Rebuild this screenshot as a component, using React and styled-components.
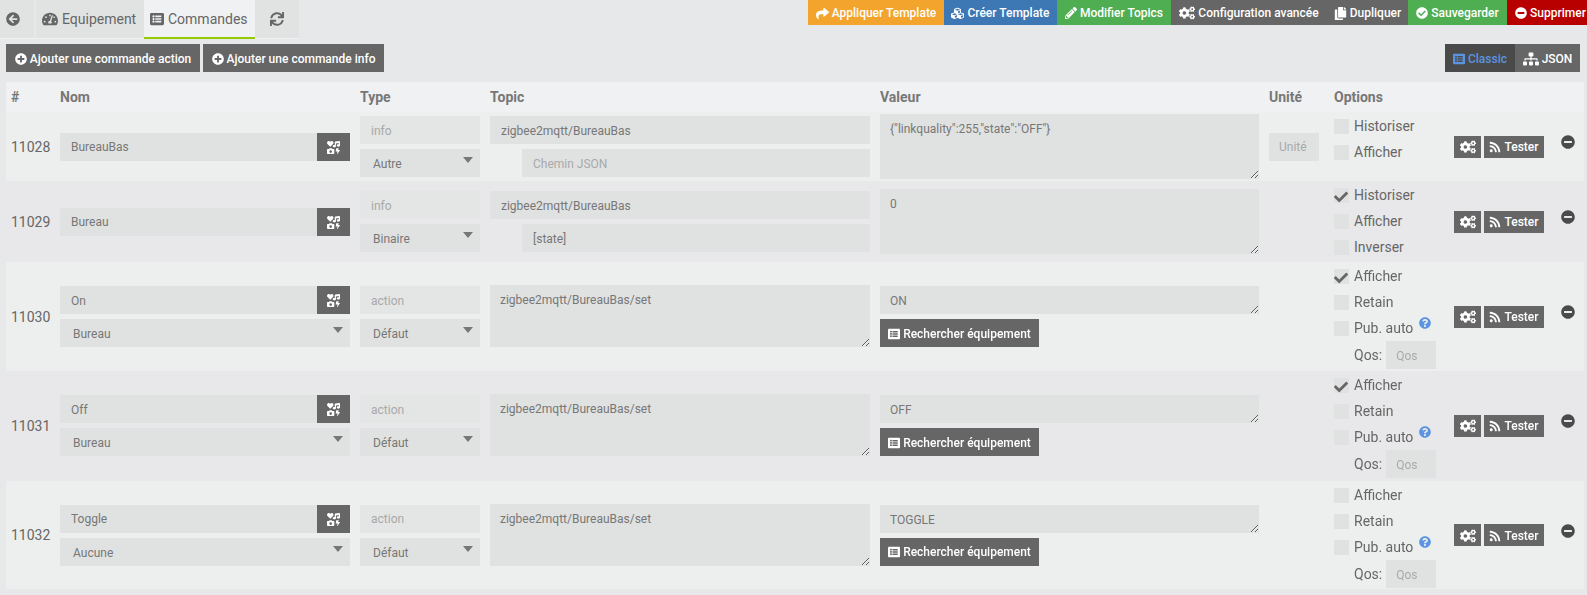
import React from 'react';
import styled, { createGlobalStyle } from 'styled-components';
import {
  FaArrowCircleLeft, FaTachometerAlt, FaListAlt, FaSync, FaShare, FaCubes, FaPencilAlt, FaCogs,
  FaCopy, FaCheckCircle, FaMinusCircle, FaPlusCircle, FaSitemap, FaRss, FaQuestionCircle, FaIcons, FaCheck,
} from 'react-icons/fa';

const GlobalStyle = createGlobalStyle`
  html, body { margin: 0; padding: 0; background: #e7e8ea; }
  body { font-family: Roboto, "Liberation Sans", sans-serif; color: #666; font-size: 14px; }
  * { box-sizing: border-box; }
`;

const Page = styled.div`
  width: 1587px;
  height: 595px;
  overflow: hidden;
`;

const Header = styled.div`
  display: flex;
  justify-content: space-between;
  height: 39px;
`;

const Tabs = styled.div`
  display: flex;
  align-items: stretch;
  width: 299px;
  border-bottom: 1px solid #f0f1f2;
`;

const Tab = styled.div`
  display: flex;
  align-items: center;
  justify-content: ${p => (p.$center ? 'center' : 'flex-start')};
  gap: 4px;
  width: ${p => p.$w}px;
  margin-left: ${p => p.$ml || 0}px;
  padding-left: ${p => (p.$center ? 0 : 6)}px;
  background: ${p => (p.$active ? '#eff1f2' : '#e1e3e3')};
  border-bottom: ${p => (p.$active ? '2px solid #93ca02' : 'none')};
  margin-bottom: ${p => (p.$active ? '-1px' : 0)};
  color: #666;
  font-size: 14px;
`;

const ActionBar = styled.div`
  display: flex;
  height: 25px;
`;

const Btn = styled.button`
  display: inline-flex;
  align-items: center;
  justify-content: center;
  gap: 3px;
  height: ${p => p.$h || 28}px;
  width: ${p => (p.$w ? `${p.$w}px` : 'auto')};
  padding: 1px 0 0 ${p => p.$pl || 0}px;
  border: 0;
  border-radius: 0;
  background: ${p => p.$bg || '#666'};
  color: ${p => p.$fg || '#fff'};
  font-family: inherit;
  font-size: 12px;
  font-weight: 500;
  white-space: nowrap;
`;

const Toolbar = styled.div`
  display: flex;
  justify-content: space-between;
  padding: 5px 7px 10px 6px;
`;

const Group = styled.div`
  display: flex;
  gap: ${p => p.$gap || 0}px;
`;

const Table = styled.div`
  margin: 0 3px 0 6px;
`;

const Cols = `
  display: grid;
  grid-template-columns: 54px 300px 130px 390px 389px 65px 120px 101px 29px;
  align-items: center;
`;

const HeadRow = styled.div`
  ${Cols}
  height: 30px;
  background: #eff1f2;
  font-weight: 700;
  color: #777;
  font-size: 14px;
`;

const HeadCell = styled.div`
  padding-left: ${p => p.$pl || 0}px;
`;

const Row = styled.div`
  ${Cols}
  ${p => (p.$h ? `height: ${p.$h}px; grid-template-rows: ${p.$h}px;` : '')}
  background: ${p => (p.$even ? '#e8e8ea' : '#edefee')};
  margin-bottom: ${p => p.$mb || 0}px;
`;

const Id = styled.div`
  padding-left: 5px;
  font-size: 14px;
  color: #666;
`;

const Stack = styled.div`
  display: flex;
  flex-direction: column;
  gap: 5px;
  width: ${p => p.$w}px;
`;

const InputRow = styled.div`
  display: flex;
`;

const Field = styled.input`
  display: block;
  width: ${p => (p.$w ? `${p.$w}px` : '100%')};
  height: 28px;
  margin-left: ${p => p.$ml || 0}px;
  padding: 1px ${p => p.$px || 11}px 0;
  border: 0;
  border-radius: 0;
  outline: 0;
  background: ${p => (p.$ghost ? '#e4e5e5' : '#e0e2e1')};
  color: ${p => (p.$ghost ? '#a9a9a9' : '#777')};
  font-family: inherit;
  font-size: 12px;
  &::placeholder { color: #a9a9a9; opacity: 1; }
`;

const IconBtn = styled(Btn)`
  flex: none;
  font-size: 14px;
`;

const SelectWrap = styled.div`
  position: relative;
  &::after {
    content: '';
    position: absolute;
    right: 7px;
    top: 8px;
    border-left: 5.5px solid transparent;
    border-right: 5.5px solid transparent;
    border-top: 6px solid #777;
  }
`;

const Select = styled.select`
  display: block;
  width: 100%;
  height: 28px;
  padding: 2px 13px 0;
  border: 0;
  border-radius: 0;
  outline: 0;
  appearance: none;
  background: #e0e2e1;
  color: #777;
  font-family: inherit;
  font-size: 12px;
`;

const Area = styled.textarea`
  display: block;
  width: ${p => p.$w}px;
  height: ${p => p.$h}px;
  margin: ${p => p.$my || 0}px 0 ${p => p.$mb ?? p.$my ?? 0}px;
  padding: 8px 10px;
  border: 0;
  border-radius: 0;
  outline: 0;
  resize: both;
  background: #e0e2e1;
  color: #777;
  font-family: inherit;
  font-size: 12px;
  line-height: 14px;
`;

const Options = styled.div`
  align-self: start;
  display: flex;
  flex-direction: column;
  gap: 11px;
  padding: 7px 0;
`;

const Option = styled.div`
  display: flex;
  align-items: center;
  gap: 5px;
  height: 15px;
  line-height: 15px;
  font-size: 14px;
  color: #666;
`;

const Box = styled.span`
  position: relative;
  flex: none;
  width: 15px;
  height: 15px;
  background: #e0e2e1;
  svg {
    position: absolute;
    left: 0;
    top: 2px;
    color: #666;
  }
`;

const Help = styled.span`
  display: inline-flex;
  margin-left: 1px;
  margin-top: -12px;
  color: #5b94e0;
`;

const Qos = styled.div`
  display: flex;
  align-items: center;
  gap: 4px;
  margin: -6px 0 -5px 20px;
  font-size: 14px;
  line-height: 28px;
`;

const Actions = styled.div`
  display: flex;
  gap: 3px;
`;

const Remove = styled.div`
  display: flex;
  justify-content: center;
  padding: 0 4px 9px 0;
  color: #4a4a4a;
  font-size: 14px;
`;

const topButtons = [
  { Icon: FaShare, size: 13, label: 'Appliquer Template', bg: '#f2a42c', w: 136 },
  { Icon: FaCubes, size: 13, label: 'Créer Template', bg: '#3e78b4', w: 113 },
  { Icon: FaPencilAlt, size: 12, label: 'Modifier Topics', bg: '#4fad52', w: 114 },
  { Icon: FaCogs, size: 16, label: 'Configuration avancée', bg: '#666', w: 156 },
  { Icon: FaCopy, size: 13, label: 'Dupliquer', bg: '#666', w: 81 },
  { Icon: FaCheckCircle, size: 12, label: 'Sauvegarder', bg: '#4fad52', w: 99 },
  { Icon: FaMinusCircle, size: 12, label: 'Supprimer', bg: '#b80000', w: 80, pl: 7 },
];

const commands = [
  {
    id: '11028', name: 'BureauBas', kind: 'info', sub: 'Autre', topic: 'zigbee2mqtt/BureauBas',
    json: '', value: '{"linkquality":255,"state":"OFF"}', unit: true,
    opts: [['Historiser', false], ['Afficher', false]],
  },
  {
    id: '11029', name: 'Bureau', kind: 'info', sub: 'Binaire', topic: 'zigbee2mqtt/BureauBas',
    json: '[state]', value: '0', even: true,
    opts: [['Historiser', true], ['Afficher', false], ['Inverser', false]],
  },
  { id: '11030', name: 'On', room: 'Bureau', kind: 'action', sub: 'Défaut', value: 'ON', on: true },
  { id: '11031', name: 'Off', room: 'Bureau', kind: 'action', sub: 'Défaut', value: 'OFF', on: true, even: true, mb: 1 },
  { id: '11032', name: 'Toggle', room: 'Aucune', kind: 'action', sub: 'Défaut', value: 'TOGGLE', on: false, h: 108 },
];

function Check({ label, on, help }) {
  return (
    <Option>
      <Box>{on && <FaCheck size={14} />}</Box>
      {label}
      {help && <Help><FaQuestionCircle size={12} /></Help>}
    </Option>
  );
}

function Command({ c }) {
  const action = c.kind === 'action';
  return (
    <Row $even={c.even} $mb={c.mb} $h={c.h}>
      <Id>{c.id}</Id>
      <Stack $w={290}>
        <InputRow>
          <Field readOnly value={c.name} />
          <IconBtn $w={33}><FaIcons size={13} /></IconBtn>
        </InputRow>
        {action && (
          <SelectWrap>
            <Select defaultValue={c.room}><option>{c.room}</option></Select>
          </SelectWrap>
        )}
      </Stack>
      <Stack $w={120}>
        <Field $ghost readOnly value={c.kind} />
        <SelectWrap>
          <Select defaultValue={c.sub}><option>{c.sub}</option></Select>
        </SelectWrap>
      </Stack>
      {action ? (
        <Area readOnly $w={380} $h={62} $mb={1} value="zigbee2mqtt/BureauBas/set" />
      ) : (
        <Stack $w={380}>
          <Field readOnly value={c.topic} />
          <Field $w={348} $ml={32} placeholder="Chemin JSON" readOnly value={c.json} />
        </Stack>
      )}
      {action ? (
        <Stack $w={379}>
          <Area readOnly $w={379} $h={28} value={c.value} />
          <Group>
            <Btn $w={159}><FaListAlt size={12} />Rechercher équipement</Btn>
          </Group>
        </Stack>
      ) : (
        <Area readOnly $w={379} $h={65} $my={2} value={c.value} />
      )}
      <div>{c.unit && <Field $w={50} $px={10} placeholder="Unité" readOnly />}</div>
      {action ? (
        <Options>
          <Check label="Afficher" on={c.on} />
          <Check label="Retain" />
          <Check label="Pub. auto" help />
          <Qos>Qos:<Field $w={50} $px={10} placeholder="Qos" readOnly /></Qos>
        </Options>
      ) : (
        <Options>
          {c.opts.map(([label, on]) => <Check key={label} label={label} on={on} />)}
        </Options>
      )}
      <Actions>
        <Btn $h={22} $w={27}><FaCogs size={16} /></Btn>
        <Btn $h={22} $w={60}><FaRss size={12} />Tester</Btn>
      </Actions>
      <Remove><FaMinusCircle size={14} /></Remove>
    </Row>
  );
}

export default function App() {
  return (
    <Page>
      <GlobalStyle />
      <Header>
        <Tabs>
          <Tab $w={34}><FaArrowCircleLeft size={14} /></Tab>
          <Tab $w={108} $ml={2}><FaTachometerAlt size={16} />Equipement</Tab>
          <Tab $w={111} $active><FaListAlt size={14} />Commandes</Tab>
          <Tab $w={44} $center><FaSync size={14} /></Tab>
        </Tabs>
        <ActionBar>
          {topButtons.map(({ Icon, size, label, bg, w, pl }) => (
            <Btn key={label} $h={25} $w={w} $bg={bg} $pl={pl}><Icon size={size} />{label}</Btn>
          ))}
        </ActionBar>
      </Header>
      <Toolbar>
        <Group $gap={3}>
          <Btn $w={194}><FaPlusCircle size={12} />Ajouter une commande action</Btn>
          <Btn $w={181}><FaPlusCircle size={12} />Ajouter une commande info</Btn>
        </Group>
        <Group>
          <Btn $w={70} $bg="#4a4a4a" $fg="#5b94e0"><FaListAlt size={12} />Classic</Btn>
          <Btn $w={65}><FaSitemap size={16} />JSON</Btn>
        </Group>
      </Toolbar>
      <Table>
        <HeadRow>
          <HeadCell $pl={5}>#</HeadCell>
          <HeadCell>Nom</HeadCell>
          <HeadCell>Type</HeadCell>
          <HeadCell>Topic</HeadCell>
          <HeadCell>Valeur</HeadCell>
          <HeadCell>Unité</HeadCell>
          <HeadCell>Options</HeadCell>
        </HeadRow>
        {commands.map(c => <Command key={c.id} c={c} />)}
      </Table>
    </Page>
  );
}
